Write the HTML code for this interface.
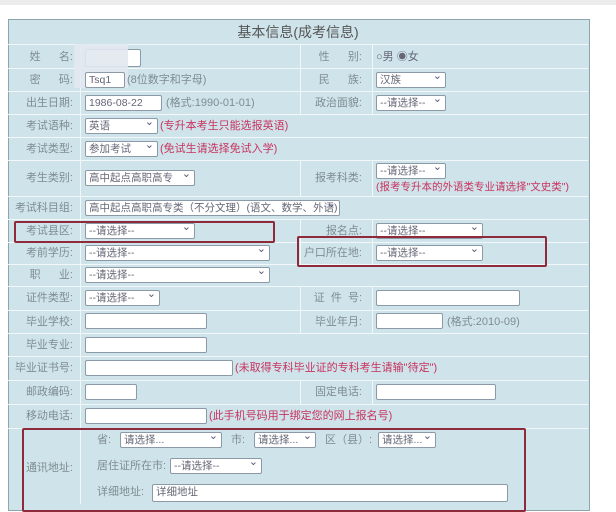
<!DOCTYPE html><html><head><meta charset="utf-8"><style>
body{margin:0;width:616px;height:500px;background:#fff;overflow:hidden;font-family:"Liberation Sans","Noto Sans CJK SC",sans-serif;font-size:11px;line-height:14px;color:#7d8c92;position:relative}
.a{position:absolute}
.tb{left:8px;top:19px;width:580px;height:490px;background:#cfe4ea;border:1px solid #8fa5ad}
.r{position:absolute;left:8px;width:580px;border-top:1px solid #f2f8fa}
.v{position:absolute;width:1px;background:#f2f8fa}
.in{position:absolute;background:#fff;border:1px solid #8c9aa8;border-radius:2px;height:16px;box-sizing:border-box;font-size:10.5px;color:#667;line-height:14px;padding-left:3px;white-space:nowrap;overflow:hidden}
.sel:after{content:"⌄";position:absolute;right:3px;top:-4px;color:#557;font-size:11px}
.red{color:#c8325f}
.lb{position:absolute;text-align:right;white-space:nowrap}
.box{position:absolute;border:2px solid #8e2a3a;border-radius:2px}
</style></head><body>
<div class="a" style="left:0;top:0;width:616px;height:5px;background:#ececec"></div>
<div class="a tb"></div>
<div class="a" style="left:8px;top:20px;width:580px;text-align:center;font-size:14px;color:#555;line-height:24px">基本信息(成考信息)</div>
<div class="r" style="top:44px"></div><div class="r" style="top:68px"></div><div class="r" style="top:91px"></div><div class="r" style="top:114px"></div><div class="r" style="top:137px"></div><div class="r" style="top:160px"></div><div class="r" style="top:196px"></div><div class="r" style="top:219px"></div><div class="r" style="top:242px"></div><div class="r" style="top:264px"></div><div class="r" style="top:286px"></div><div class="r" style="top:310px"></div><div class="r" style="top:333px"></div><div class="r" style="top:356px"></div><div class="r" style="top:380px"></div><div class="r" style="top:404px"></div><div class="r" style="top:428px"></div>
<div class="v" style="left:80px;top:44px;height:460px"></div>
<div class="v" style="left:300px;top:44px;height:70px"></div><div class="v" style="left:372px;top:44px;height:70px"></div>
<div class="v" style="left:300px;top:160px;height:36px"></div><div class="v" style="left:372px;top:160px;height:36px"></div>
<div class="v" style="left:300px;top:219px;height:45px"></div><div class="v" style="left:372px;top:219px;height:45px"></div>
<div class="v" style="left:300px;top:286px;height:47px"></div><div class="v" style="left:372px;top:286px;height:47px"></div>
<div class="v" style="left:300px;top:380px;height:24px"></div><div class="v" style="left:372px;top:380px;height:24px"></div>
<div class="lb" style="right:543px;top:50px">姓&nbsp;&nbsp;&nbsp;&nbsp;&nbsp;&nbsp;名:</div>
<div class="lb" style="right:543px;top:73px">密&nbsp;&nbsp;&nbsp;&nbsp;&nbsp;&nbsp;码:</div>
<div class="lb" style="right:543px;top:96px">出生日期:</div>
<div class="lb" style="right:543px;top:119px">考试语种:</div>
<div class="lb" style="right:543px;top:142px">考试类型:</div>
<div class="lb" style="right:543px;top:171px">考生类别:</div>
<div class="lb" style="right:543px;top:201px">考试科目组:</div>
<div class="lb" style="right:543px;top:224px">考试县区:</div>
<div class="lb" style="right:543px;top:246px">考前学历:</div>
<div class="lb" style="right:543px;top:268px">职&nbsp;&nbsp;&nbsp;&nbsp;&nbsp;&nbsp;业:</div>
<div class="lb" style="right:543px;top:291px">证件类型:</div>
<div class="lb" style="right:543px;top:315px">毕业学校:</div>
<div class="lb" style="right:543px;top:338px">毕业专业:</div>
<div class="lb" style="right:543px;top:361px">毕业证书号:</div>
<div class="lb" style="right:543px;top:385px">邮政编码:</div>
<div class="lb" style="right:543px;top:409px">移动电话:</div>
<div class="lb" style="right:543px;top:461px">通讯地址:</div>
<div class="lb" style="right:254px;top:50px">性&nbsp;&nbsp;&nbsp;&nbsp;&nbsp;&nbsp;别:</div>
<div class="lb" style="right:254px;top:73px">民&nbsp;&nbsp;&nbsp;&nbsp;&nbsp;&nbsp;族:</div>
<div class="lb" style="right:254px;top:96px">政治面貌:</div>
<div class="lb" style="right:254px;top:171px">报考科类:</div>
<div class="lb" style="right:254px;top:224px">报名点:</div>
<div class="lb" style="right:254px;top:246px">户口所在地:</div>
<div class="lb" style="right:254px;top:291px">证&nbsp;&nbsp;件&nbsp;&nbsp;号:</div>
<div class="lb" style="right:254px;top:315px">毕业年月:</div>
<div class="lb" style="right:254px;top:385px">固定电话:</div>
<div class="in" style="left:85px;top:49px;width:56px;height:18px"></div>
<div class="a" style="left:74px;top:44px;width:54px;height:44px;background:#e2e8f0;opacity:.9"></div>
<div class="a" style="left:376px;top:50px;color:#667">○男 ◉女</div>
<div class="in" style="left:85px;top:72px;width:40px">Tsq1</div><div class="a" style="left:127px;top:73px">(8位数字和字母)</div>
<div class="in sel" style="left:376px;top:72px;width:70px">汉族</div>
<div class="in" style="left:85px;top:95px;width:77px">1986-08-22</div><div class="a" style="left:166px;top:96px">(格式:1990-01-01)</div>
<div class="in sel" style="left:376px;top:95px;width:70px">--请选择--</div>
<div class="in sel" style="left:85px;top:118px;width:73px">英语</div><div class="a red" style="left:160px;top:119px">(专升本考生只能选报英语)</div>
<div class="in sel" style="left:85px;top:141px;width:73px">参加考试</div><div class="a red" style="left:160px;top:142px">(免试生请选择免试入学)</div>
<div class="in sel" style="left:85px;top:170px;width:110px">高中起点高职高专</div>
<div class="in sel" style="left:376px;top:163px;width:70px">--请选择--</div>
<div class="a red" style="left:376px;top:180px;font-size:10.5px">(报考专升本的外语类专业请选择"文史类")</div>
<div class="in sel" style="left:85px;top:200px;width:255px">高中起点高职高专类（不分文理）(语文、数学、外语)</div>
<div class="in sel" style="left:85px;top:223px;width:110px">--请选择--</div>
<div class="in sel" style="left:376px;top:223px;width:107px">--请选择--</div>
<div class="in sel" style="left:85px;top:245px;width:185px">--请选择--</div>
<div class="in sel" style="left:376px;top:245px;width:107px">--请选择--</div>
<div class="in sel" style="left:85px;top:267px;width:185px">--请选择--</div>
<div class="in sel" style="left:85px;top:290px;width:75px">--请选择--</div>
<div class="in" style="left:376px;top:290px;width:144px"></div>
<div class="in" style="left:85px;top:313px;width:122px"></div>
<div class="in" style="left:376px;top:313px;width:67px"></div><div class="a" style="left:447px;top:315px">(格式:2010-09)</div>
<div class="in" style="left:85px;top:337px;width:122px"></div>
<div class="in" style="left:85px;top:360px;width:148px"></div><div class="a red" style="left:235px;top:361px">(未取得专科毕业证的专科考生请输"待定")</div>
<div class="in" style="left:85px;top:384px;width:52px"></div>
<div class="in" style="left:376px;top:384px;width:120px"></div>
<div class="in" style="left:85px;top:408px;width:122px"></div><div class="a red" style="left:209px;top:409px">(此手机号码用于绑定您的网上报名号)</div>
<div class="a" style="left:97px;top:433px">省:</div><div class="in sel" style="left:120px;top:432px;width:102px">请选择...</div>
<div class="a" style="left:231px;top:433px">市:</div><div class="in sel" style="left:254px;top:432px;width:62px">请选择...</div>
<div class="a" style="left:325px;top:433px">区（县）:</div><div class="in sel" style="left:378px;top:432px;width:58px">请选择...</div>
<div class="a" style="left:97px;top:459px">居住证所在市:</div><div class="in sel" style="left:170px;top:458px;width:92px">--请选择--</div>
<div class="a" style="left:97px;top:485px">详细地址:</div><div class="in" style="left:152px;top:484px;width:356px;height:18px">详细地址</div>
<div class="box" style="left:14px;top:221px;width:257px;height:18px"></div>
<div class="box" style="left:297px;top:236px;width:246px;height:27px"></div>
<div class="box" style="left:22px;top:428px;width:500px;height:80px"></div>
</body></html>
